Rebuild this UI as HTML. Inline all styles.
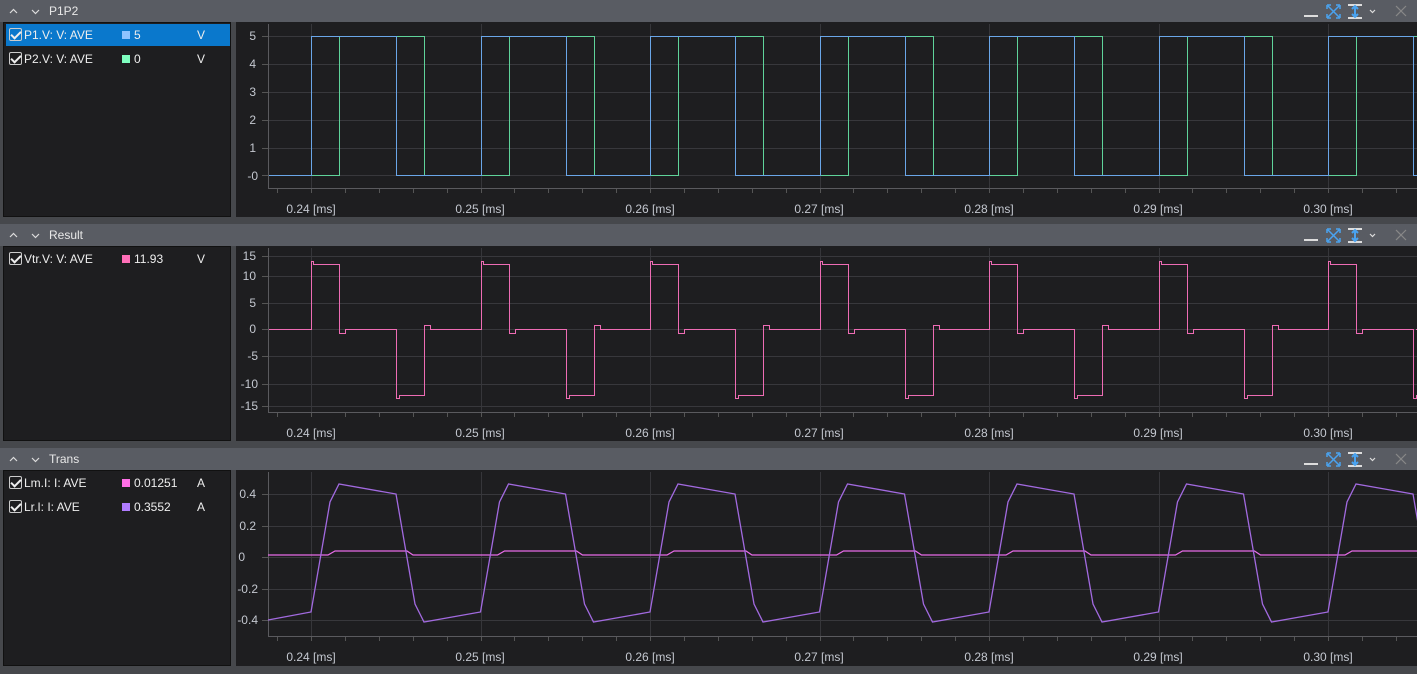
<!DOCTYPE html>
<html><head><meta charset="utf-8"><style>
*{margin:0;padding:0;box-sizing:border-box}
body{width:1417px;height:674px;background:#46484c;font-family:"Liberation Sans",sans-serif;font-size:12px;color:#ddd;position:relative;overflow:hidden}
.hdr{position:absolute;left:0;width:1417px;height:22px;background:#595c63}
.hdr .t{position:absolute;left:49px;top:4px;color:#e8e8e8}
.list{position:absolute;left:3px;width:228px;background:#1e1e20;border:1px solid #111}
.plot{position:absolute;left:236px;width:1181px;background:#1e1e20}
.row{position:absolute;left:2px;width:224px;height:22px}
.row.sel{background:#0a78cc}
.cb{position:absolute;left:3px;top:4px;width:13px;height:13px;border:1px solid #ccc;border-radius:2px}
.cb:after{content:"";position:absolute;left:3px;top:0px;width:4px;height:8px;border:solid #eee;border-width:0 2px 2px 0;transform:rotate(45deg)}
.row span{position:absolute;top:4px;color:#eee}
.sw{position:absolute;top:7px;width:8px;height:8px}
svg{position:absolute;left:0;top:0}
#w div{position:absolute}
</style></head><body>
<div class="hdr" style="top:0"><span class="t">P1P2</span></div>
<div class="hdr" style="top:224px"><span class="t">Result</span></div>
<div class="hdr" style="top:448px"><span class="t">Trans</span></div>

<div class="list" style="top:22px;height:195px">
<div class="row sel" style="top:1px"><div class="cb"></div><span style="left:18px">P1.V: V: AVE</span><div class="sw" style="left:116px;background:#8fc3ff"></div><span style="left:128px">5</span><span style="left:191px">V</span></div>
<div class="row" style="top:25px"><div class="cb"></div><span style="left:18px">P2.V: V: AVE</span><div class="sw" style="left:116px;background:#7fffc0"></div><span style="left:128px">0</span><span style="left:191px">V</span></div>
</div>
<div class="list" style="top:246px;height:195px">
<div class="row" style="top:1px"><div class="cb"></div><span style="left:18px">Vtr.V: V: AVE</span><div class="sw" style="left:116px;background:#ff6fb8"></div><span style="left:128px">11.93</span><span style="left:191px">V</span></div>
</div>
<div class="list" style="top:470px;height:196px">
<div class="row" style="top:1px"><div class="cb"></div><span style="left:18px">Lm.I: I: AVE</span><div class="sw" style="left:116px;background:#ff6fe6"></div><span style="left:128px">0.01251</span><span style="left:191px">A</span></div>
<div class="row" style="top:25px"><div class="cb"></div><span style="left:18px">Lr.I: I: AVE</span><div class="sw" style="left:116px;background:#b07cff"></div><span style="left:128px">0.3552</span><span style="left:191px">A</span></div>
</div>
<div class="plot" style="top:22px;height:195px"></div>
<div class="plot" style="top:246px;height:195px"></div>
<div class="plot" style="top:470px;height:196px"></div>

<svg id="s" width="1417" height="674" font-family="Liberation Sans" font-size="12">
<g fill="#c4c8d0" text-anchor="end">
<text x="256" y="40">5</text><text x="256" y="68">4</text><text x="256" y="96">3</text><text x="256" y="124">2</text><text x="256" y="152">1</text><text x="258" y="180">-0</text>
<text x="256" y="260">15</text><text x="256" y="280">10</text><text x="256" y="307">5</text><text x="256" y="333">0</text><text x="258" y="360">-5</text><text x="258" y="388">-10</text><text x="258" y="410">-15</text>
<text x="256" y="498">0.4</text><text x="256" y="530">0.2</text><text x="245" y="561">0</text><text x="258" y="593">-0.2</text><text x="258" y="624">-0.4</text>
</g>
<g fill="#c4c8d0" text-anchor="middle">
<text x="311" y="213">0.24 [ms]</text><text x="480" y="213">0.25 [ms]</text><text x="650" y="213">0.26 [ms]</text><text x="819" y="213">0.27 [ms]</text><text x="989" y="213">0.28 [ms]</text><text x="1158" y="213">0.29 [ms]</text><text x="1328" y="213">0.30 [ms]</text>
<text x="311" y="437">0.24 [ms]</text><text x="480" y="437">0.25 [ms]</text><text x="650" y="437">0.26 [ms]</text><text x="819" y="437">0.27 [ms]</text><text x="989" y="437">0.28 [ms]</text><text x="1158" y="437">0.29 [ms]</text><text x="1328" y="437">0.30 [ms]</text>
<text x="311" y="661">0.24 [ms]</text><text x="480" y="661">0.25 [ms]</text><text x="650" y="661">0.26 [ms]</text><text x="819" y="661">0.27 [ms]</text><text x="989" y="661">0.28 [ms]</text><text x="1158" y="661">0.29 [ms]</text><text x="1328" y="661">0.30 [ms]</text>
</g>
<g id="g"></g>
</svg>
<div id="w"></div>
<script>
var g=document.getElementById('g'),h='',wh='';
function L(d,c,w){h+='<path d="'+d+'" fill="none" stroke="'+c+'" stroke-width="'+(w||1)+'"/>';}
function R(v){return Math.round(v)+0.5;}
// axis-aligned polyline as divs; pts integer
function D(pts,c){for(var i=1;i<pts.length;i++){var a=pts[i-1],b=pts[i];var x=Math.min(a[0],b[0]),y=Math.min(a[1],b[1]);var w=Math.abs(a[0]-b[0])+1,hh=Math.abs(a[1]-b[1])+1;if(x>1417)continue;wh+='<div style="left:'+x+'px;top:'+y+'px;width:'+Math.min(w,1417-x)+'px;height:'+hh+'px;background:'+c+'"></div>';}}
var P=169.5,x0=311;
var panels=[[24,188,[36,64,92,120,148,175]],[248,412,[256,276,303,329,356,384,406]],[472,636,[494,526,557,589,620]]];
panels.forEach(function(p){
 var d='';
 for(var k=0;k<7;k++){d+='M'+R(x0+k*P)+' '+p[0]+'V'+p[1];}
 L(d,'#36363a');d='';
 p[2].forEach(function(y){d+='M268 '+(y+0.5)+'H1417';});L(d,'#38383c');
 d='';p[2].forEach(function(y){d+='M262 '+(y+0.5)+'H268';});
 for(var k=-1;k<8;k++){for(var j=0;j<5;j++){var x=x0+k*P+j*P/5;if(x>268&&x<1417)d+='M'+R(x)+' '+p[1]+'v5';}}
 L(d,'#555');
 L('M268.5 '+p[0]+'V'+(p[1]+0.5)+'H1417','#5a5a5e');
});
function sq(off,c){var pts=[[269,175]];for(var k=-1;k<7;k++){var a=Math.round(x0+k*P+off),b=Math.round(x0+k*P+off+85);if(a>268){pts.push([a,175],[a,36]);}else if(b>268){pts=[[269,36]];}if(b>268){pts.push([Math.min(b,1416),36]);if(b<1417)pts.push([b,175]);}}var l=pts[pts.length-1];pts.push([1416,l[1]]);D(pts,c);}
sq(28,'#5fd39a');sq(0,'#6aa6e8');
var pts=[[269,329]];
for(var k=0;k<7;k++){var a=Math.round(x0+k*P);
 pts.push([a,329],[a,261],[a+2,261],[a+2,264],[a+28,264],[a+28,333],[a+34,333],[a+34,329]);
 if(a+85<1417)pts.push([a+85,329],[a+85,398],[a+88,398],[a+88,395],[a+113,395],[a+113,325],[a+119,325],[a+119,329]);}
pts.push([1416,329]);D(pts,'#ee6cb4');
var d='M268 555';for(var k=0;k<7;k++){var a=x0+k*P;d+='L'+(a+17)+' 555L'+(a+24)+' 551L'+(a+96)+' 551L'+(a+102)+' 555';}
L(d,'#e86ce8',1.2);
d='M268 620';for(var k=0;k<7;k++){var a=x0+k*P;d+='L'+a.toFixed(1)+' 612L'+(a+19)+' 502L'+(a+28)+' 484L'+(a+85)+' 494L'+(a+104)+' 604L'+(a+113)+' 622';}
L(d,'#a26ae0',1.3);
[0,224,448].forEach(function(t){
 L('M10 '+(t+13)+'l3.5-3.5 3.5 3.5M32 '+(t+10)+'l3.5 3.5 3.5-3.5','#ddd',1.2);
 L('M1304 '+(t+16)+'h14','#ddd',2);
 L('M1327 '+(t+5)+'h4M1327 '+(t+5)+'v4M1340 '+(t+5)+'h-4M1340 '+(t+5)+'v4M1327 '+(t+18)+'h4M1327 '+(t+18)+'v-4M1340 '+(t+18)+'h-4M1340 '+(t+18)+'v-4M1328 '+(t+6)+'l11 11M1339 '+(t+6)+'l-11 11','#4aa3f0',1.5);
 L('M1348 '+(t+5)+'h14M1348 '+(t+18)+'h14','#ddd',2);
 L('M1355 '+(t+7)+'v9M1352 '+(t+9)+'l3-3 3 3M1352 '+(t+14)+'l3 3 3-3','#4aa3f0',2);
 L('M1370 '+(t+10)+'l2.5 2.5 2.5-2.5','#ddd',1.2);
 L('M1396 '+(t+6)+'l10 10M1406 '+(t+6)+'l-10 10','#888',1.2);
});
g.innerHTML=h;
document.getElementById('w').innerHTML=wh;
</script>
</body></html>
